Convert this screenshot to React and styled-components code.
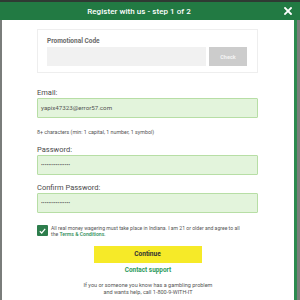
import React from "react";
import styled, { createGlobalStyle } from "styled-components";

const Global = createGlobalStyle`
  html, body { margin: 0; padding: 0; }
  body { font-family: Roboto, "Liberation Sans", Arial, sans-serif; background: #5f6460; }
  * { box-sizing: border-box; }
`;

const Screen = styled.div`
  width: 300px;
  height: 300px;
  overflow: hidden;
  background: linear-gradient(#2f3a33 0 2px, #7a7d7b 2px);
`;

const Header = styled.div`
  margin-top: 2px;
  height: 18px;
  background: #227a43;
  display: flex;
  align-items: center;
`;

const Title = styled.div`
  flex: 1;
  text-align: center;
  color: #ffffff;
  font-size: 8px;
  font-weight: 500;
  letter-spacing: 0.05px;
`;

const Close = styled.div`
  width: 8px;
  height: 8px;
  margin: 0 8px 0 6px;
  display: flex;
`;

const Body = styled.div`
  margin-left: 2px;
  width: 295px;
  height: 280px;
  background: #ffffff;
  border-right: 3px solid #2c8a4f;
  padding: 9px 36px 0 35px;
`;

const Card = styled.div`
  border: 1px solid #eeeeee;
  padding: 7px 10px 6px 9px;
`;

const CardLabel = styled.div`
  font-size: 6.5px;
  font-weight: 700;
  line-height: 9px;
  color: #6a6a6a;
  margin-bottom: 1px;
`;

const PromoRow = styled.div`
  display: flex;
  gap: 3px;
`;

const PromoInput = styled.div`
  flex: 1;
  height: 19px;
  background: #f1f1f1;
`;

const CheckButton = styled.div`
  width: 38px;
  height: 19px;
  background: #cccccc;
  color: #f4f4f4;
  font-size: 5.5px;
  font-weight: 700;
  display: flex;
  align-items: center;
  justify-content: center;
`;

const Label = styled.div`
  font-size: 7.5px;
  line-height: 11px;
  color: #4a4a4a;
  margin-top: ${(p) => p.$mt}px;
`;

const Input = styled.div`
  height: 20px;
  background: #e3f4dc;
  border: 1px solid #b7dea5;
  border-radius: 1px;
  display: flex;
  align-items: center;
  padding-left: 3px;
  font-size: ${(p) => (p.$dots ? "5.4px" : "6.2px")};
  color: #555;
`;

const Hint = styled.div`
  margin-top: 10px;
  font-size: 5.3px;
  line-height: 9px;
  color: #555;
`;

const AgreeRow = styled.div`
  margin-top: 12px;
  display: flex;
  gap: 3px;
`;

const Box = styled.div`
  width: 11px;
  height: 11px;
  flex: none;
  background: #2d7d4c;
  border-radius: 1px;
  display: flex;
  align-items: center;
  justify-content: center;
`;

const AgreeText = styled.div`
  font-size: 5.1px;
  line-height: 6.3px;
  color: #555;
  white-space: nowrap;
`;

const Link = styled.span`
  color: #2b8b55;
  font-weight: 500;
`;

const ContinueButton = styled.div`
  margin: 8px auto 0;
  width: 108px;
  height: 17px;
  background: #f6ea28;
  color: #333;
  font-size: 6.6px;
  font-weight: 700;
  display: flex;
  align-items: center;
  justify-content: center;
`;

const Support = styled.div`
  margin-top: 3px;
  text-align: center;
  font-size: 6.4px;
  font-weight: 700;
  line-height: 9px;
  color: #2c9a5c;
  padding-left: 1px;
`;

const Footer = styled.div`
  margin-top: 7px;
  text-align: center;
  font-size: 5.5px;
  line-height: 7.2px;
  color: #555;
  padding-left: 1px;
`;

export default function App() {
  return (
    <>
      <Global />
      <Screen>
        <Header>
          <Title>Register with us - step 1 of 2</Title>
          <Close>
            <svg width="8" height="8" viewBox="0 0 8 8">
              <path d="M1 1 L7 7 M7 1 L1 7" stroke="#fff" strokeWidth="1.8" strokeLinecap="square" />
            </svg>
          </Close>
        </Header>
        <Body>
          <Card>
            <CardLabel>Promotional Code</CardLabel>
            <PromoRow>
              <PromoInput />
              <CheckButton>Check</CheckButton>
            </PromoRow>
          </Card>
          <Label $mt={14}>Email:</Label>
          <Input>yapix47323@error57.com</Input>
          <Hint>8+ characters (min: 1 capital, 1 number, 1 symbol)</Hint>
          <Label $mt={7}>Password:</Label>
          <Input $dots>••••••••••••••••</Input>
          <Label $mt={7}>Confirm Password:</Label>
          <Input $dots>••••••••••••••••</Input>
          <AgreeRow>
            <Box>
              <svg width="7" height="6" viewBox="0 0 7 6">
                <path d="M0.8 3.2 L2.7 5 L6.2 0.8" stroke="#fff" strokeWidth="1.2" fill="none" />
              </svg>
            </Box>
            <AgreeText>
              All real money wagering must take place in Indiana. I am 21 or older and agree to all
              <br />
              the <Link>Terms &amp; Conditions</Link>.
            </AgreeText>
          </AgreeRow>
          <ContinueButton>Continue</ContinueButton>
          <Support>Contact support</Support>
          <Footer>
            If you or someone you know has a gambling problem
            <br />
            and wants help, call 1-800-9-WITH-IT
          </Footer>
        </Body>
      </Screen>
    </>
  );
}
